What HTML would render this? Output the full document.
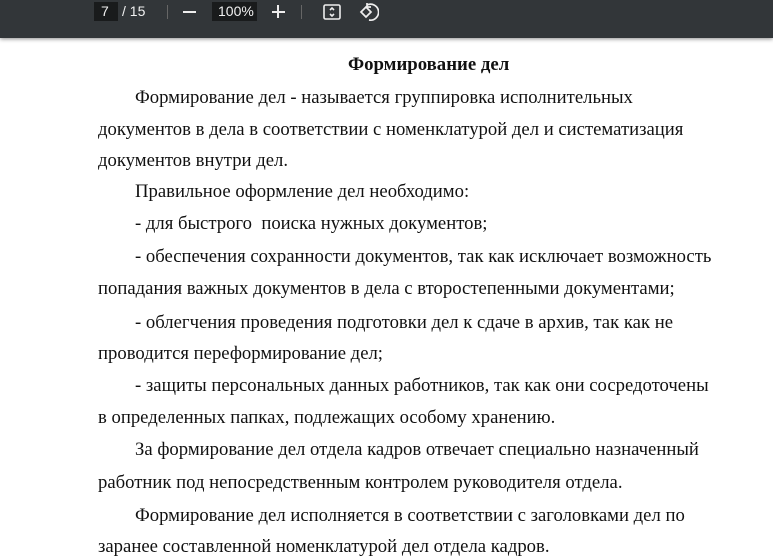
<!DOCTYPE html>
<html><head><meta charset="utf-8"><style>
html,body{margin:0;padding:0;width:773px;height:548px;overflow:hidden;background:#fff;}
.bar{position:absolute;left:0;top:0;width:773px;height:38px;background:#323639;box-shadow:0 1px 4px rgba(0,0,0,.45);z-index:2;font-family:"Liberation Sans",sans-serif;color:#f1f1f1;font-size:14px;}
.box{position:absolute;top:2px;height:19px;background:#191b1c;}
.l{position:absolute;white-space:nowrap;font-family:"Liberation Serif",serif;font-size:18.7px;color:#111;line-height:20px;margin-top:1px;}
</style></head><body>
<div class="bar">
<div class="box" style="left:94px;width:24px"></div>
<span style="position:absolute;left:101px;top:3px">7</span>
<span style="position:absolute;left:122px;top:3px">/ 15</span>
<div style="position:absolute;left:167px;top:5px;width:1px;height:14px;background:#666"></div>
<div style="position:absolute;left:183px;top:11px;width:13px;height:2px;background:#eee"></div>
<div class="box" style="left:212px;width:45px"></div>
<span style="position:absolute;left:218px;top:3px">100%</span>
<div style="position:absolute;left:272px;top:11px;width:13px;height:2px;background:#eee"></div>
<div style="position:absolute;left:277px;top:5px;width:2px;height:13px;background:#eee"></div>
<div style="position:absolute;left:301px;top:5px;width:1px;height:14px;background:#666"></div>
<svg style="position:absolute;left:322px;top:2px" width="20" height="20" viewBox="0 0 20 20" fill="none" stroke="#eee" stroke-width="1.6"><rect x="2" y="3" width="16" height="14" rx="1.5"/><path d="M8 8l2-2 2 2M8 12l2 2 2-2" /></svg>
<svg style="position:absolute;left:357px;top:1px" width="22" height="22" viewBox="0 0 22 22" fill="none" stroke="#eee" stroke-width="1.7"><path d="M4 11l5-5 5 5-5 5z"/><path d="M10 4a8 8 0 1 1 2 15"/><path d="M10 2v4h4"/></svg>
</div>
<div class="l" style="left:348px;top:54px;font-weight:bold;font-size:18.8px">Формирование дел</div>
<div class="l" style="left:135px;top:87px">Формирование дел - называется группировка исполнительных</div>
<div class="l" style="left:98px;top:119px">документов в дела в соответствии с номенклатурой дел и систематизация</div>
<div class="l" style="left:98px;top:150px">документов внутри дел.</div>
<div class="l" style="left:135px;top:181px">Правильное оформление дел необходимо:</div>
<div class="l" style="left:135px;top:213px">- для быстрого&nbsp; поиска нужных документов;</div>
<div class="l" style="left:135px;top:246px">- обеспечения сохранности документов, так как исключает возможность</div>
<div class="l" style="left:98px;top:278px">попадания важных документов в дела с второстепенными документами;</div>
<div class="l" style="left:135px;top:312px">- облегчения проведения подготовки дел к сдаче в архив, так как не</div>
<div class="l" style="left:98px;top:343px">проводится переформирование дел;</div>
<div class="l" style="left:135px;top:375px">- защиты персональных данных работников, так как они сосредоточены</div>
<div class="l" style="left:98px;top:407px">в определенных папках, подлежащих особому хранению.</div>
<div class="l" style="left:135px;top:439px">За формирование дел отдела кадров отвечает специально назначенный</div>
<div class="l" style="left:98px;top:472px">работник под непосредственным контролем руководителя отдела.</div>
<div class="l" style="left:135px;top:505px">Формирование дел исполняется в соответствии с заголовками дел по</div>
<div class="l" style="left:98px;top:536px">заранее составленной номенклатурой дел отдела кадров.</div>
</body></html>
